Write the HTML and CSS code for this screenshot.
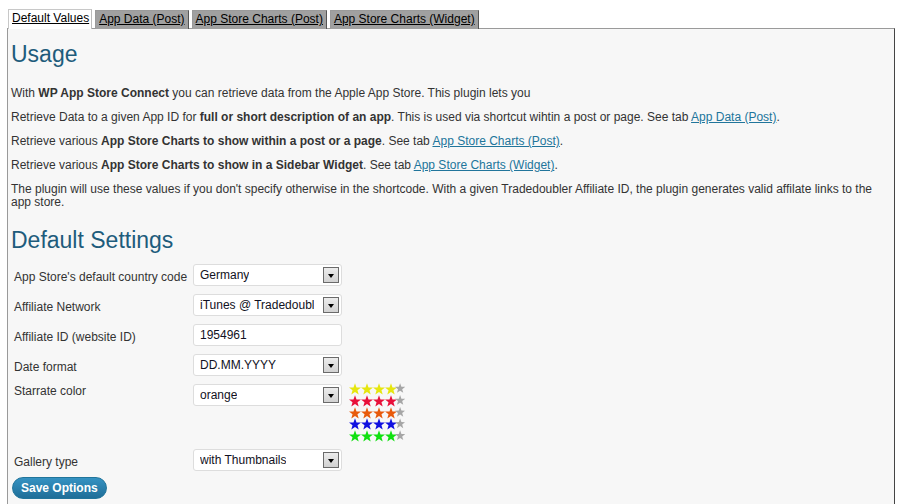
FILE: index.html
```html
<!DOCTYPE html>
<html>
<head>
<meta charset="utf-8">
<link rel="stylesheet" href="styles.css">
</head>
<body>
<div class="wrap">
  <ul class="tabs">
    <li class="tab active"><a href="#">Default Values</a></li>
    <li class="tab"><a href="#">App Data (Post)</a></li>
    <li class="tab"><a href="#">App Store Charts (Post)</a></li>
    <li class="tab"><a href="#">App Store Charts (Widget)</a></li>
  </ul>
  <div class="panel">
    <h2 class="title">Usage</h2>
    <p class="text">With <b>WP App Store Connect</b> you can retrieve data from the Apple App Store. This plugin lets you</p>
    <p class="text">Retrieve Data to a given App ID for <b>full or short description of an app</b>. This is used via shortcut wihtin a post or page. See tab <a class="link" href="#">App Data (Post)</a>.</p>
    <p class="text">Retrieve various <b>App Store Charts to show within a post or a page</b>. See tab <a class="link" href="#">App Store Charts (Post)</a>.</p>
    <p class="text">Retrieve various <b>App Store Charts to show in a Sidebar Widget</b>. See tab <a class="link" href="#">App Store Charts (Widget)</a>.</p>
    <p class="text">The plugin will use these values if you don't specify otherwise in the shortcode. With a given Tradedoubler Affiliate ID, the plugin generates valid affilate links to the app store.</p>
    <h2 class="title title-settings">Default Settings</h2>
    <div class="form">
      <div class="row">
        <label class="label">App Store's default country code</label>
        <div class="select"><span class="value">Germany</span><span class="arrow"></span></div>
      </div>
      <div class="row">
        <label class="label">Affiliate Network</label>
        <div class="select"><span class="value">iTunes @ Tradedoubl</span><span class="arrow"></span></div>
      </div>
      <div class="row">
        <label class="label">Affiliate ID (website ID)</label>
        <div class="input"><span class="value">1954961</span></div>
      </div>
      <div class="row">
        <label class="label">Date format</label>
        <div class="select"><span class="value">DD.MM.YYYY</span><span class="arrow"></span></div>
      </div>
      <div class="row row-stars">
        <label class="label label-top">Starrate color</label>
        <div class="select"><span class="value">orange</span><span class="arrow"></span></div>
        <svg class="stars" width="56" height="60" viewBox="0 0 56 60">
          <defs>
            <path id="star" d="M6 0.2 L7.53 4.4 L12 4.55 L8.47 7.3 L9.7 11.6 L6 9.1 L2.3 11.6 L3.53 7.3 L0 4.55 L4.47 4.4 Z"/>
          </defs>
          <g fill="#e6e60e">
            <use href="#star" x="0" y="0"/><use href="#star" x="12" y="0"/><use href="#star" x="24" y="0"/><use href="#star" x="36" y="0"/>
          </g>
          <g fill="#e8103a">
            <use href="#star" x="0" y="12"/><use href="#star" x="12" y="12"/><use href="#star" x="24" y="12"/><use href="#star" x="36" y="12"/>
          </g>
          <g fill="#e85a0c">
            <use href="#star" x="0" y="24"/><use href="#star" x="12" y="24"/><use href="#star" x="24" y="24"/><use href="#star" x="36" y="24"/>
          </g>
          <g fill="#1010e0">
            <use href="#star" x="0" y="35"/><use href="#star" x="12" y="35"/><use href="#star" x="24" y="35"/><use href="#star" x="36" y="35"/>
          </g>
          <g fill="#10e010">
            <use href="#star" x="0" y="47"/><use href="#star" x="12" y="47"/><use href="#star" x="24" y="47"/><use href="#star" x="36" y="47"/>
          </g>
          <g fill="#a6a6a6" transform="translate(46 0) scale(0.85)">
            <use href="#star" x="0" y="0"/><use href="#star" x="0" y="14"/><use href="#star" x="0" y="28"/><use href="#star" x="0" y="41.5"/><use href="#star" x="0" y="55.5"/>
          </g>
        </svg>
      </div>
      <div class="row row-last">
        <label class="label">Gallery type</label>
        <div class="select"><span class="value">with Thumbnails</span><span class="arrow"></span></div>
      </div>
    </div>
    <button class="button">Save Options</button>
  </div>
</div>
</body>
</html>
```

FILE: styles.css
```css
html, body {
  margin: 0;
  padding: 0;
  background: #ffffff;
}
body {
  font-family: "Liberation Sans", Arial, sans-serif;
  font-size: 12px;
  color: #333333;
}
.wrap {
  padding: 9px 3px 0 7px;
}
.tabs {
  list-style: none;
  margin: 0 0 -1px 1px;
  padding: 0;
  display: flex;
  align-items: flex-end;
  position: relative;
  z-index: 1;
}
.tab {
  margin-right: 3px;
  height: 19px;
  box-sizing: border-box;
  padding: 0 3px;
  border: 1px solid #9a9a9a;
  border-right-color: #555555;
  border-bottom: none;
  background: #a0a0a0;
  line-height: 17px;
}
.tab a {
  color: #000000;
  text-decoration: underline;
  font-size: 12px;
}
.tab.active {
  background: #ffffff;
  border-color: #c8c8c8;
  border-right-color: #bcbcbc;
  height: 20px;
  padding: 0 2px 1px 3px;
}
.panel {
  background: #f7f7f7;
  border-top: 1px solid #9a9a9a;
  border-left: 1px solid #9a9a9a;
  border-right: 1px solid #444444;
  padding: 0 4px 20px 3px;
  min-height: 480px;
}
.title {
  font-family: "Liberation Sans", Arial, sans-serif;
  font-weight: normal;
  font-size: 23px;
  line-height: 29px;
  color: #1e5c7c;
  margin: 11px 0 18px 0;
}
.title-settings {
  margin-top: 17px;
  margin-bottom: 9px;
}
.text {
  margin: 11px 0;
  line-height: 13px;
}
.text b {
  color: #333333;
}
.link {
  color: #21759b;
  text-decoration: underline;
}
.form {
  padding-left: 3px;
}
.row {
  display: flex;
  align-items: flex-start;
  margin-bottom: 8px;
}
.row-stars {
  margin-bottom: 6px;
}
.row-last {
  margin-bottom: 6px;
}
.label {
  width: 179px;
  flex: none;
  padding-top: 7px;
  line-height: 13px;
  color: #333333;
}
.label-top {
  padding-top: 1px;
}
.select, .input {
  width: 149px;
  height: 22px;
  box-sizing: border-box;
  flex: none;
  background: #ffffff;
  border: 1px solid #dddddd;
  border-radius: 3px;
  display: flex;
  align-items: center;
  justify-content: space-between;
  padding: 0 2px 0 6px;
  color: #111122;
  font-size: 12px;
}
.value {
  white-space: nowrap;
  overflow: hidden;
  margin-top: -1px;
}
.arrow {
  width: 16px;
  height: 16px;
  box-sizing: border-box;
  flex: none;
  border: 1px solid #6a6a6a;
  background: linear-gradient(#ececec, #d2d2d2);
  display: flex;
  align-items: center;
  justify-content: center;
  padding-top: 2px;
  margin-left: 2px;
}
.arrow::after {
  content: "";
  width: 0;
  height: 0;
  border-left: 3.5px solid transparent;
  border-right: 3.5px solid transparent;
  border-top: 4px solid #000000;
}
.stars {
  margin-left: 7px;
  margin-top: -1px;
  display: block;
}
.button {
  margin-left: 1px;
  height: 22px;
  padding: 0 8px;
  border: 1px solid #21759b;
  border-radius: 11px;
  background: linear-gradient(#3592c2, #1f6e98);
  color: #ffffff;
  font-family: "Liberation Sans", Arial, sans-serif;
  font-size: 12px;
  font-weight: bold;
  line-height: 20px;
  cursor: pointer;
}
```
